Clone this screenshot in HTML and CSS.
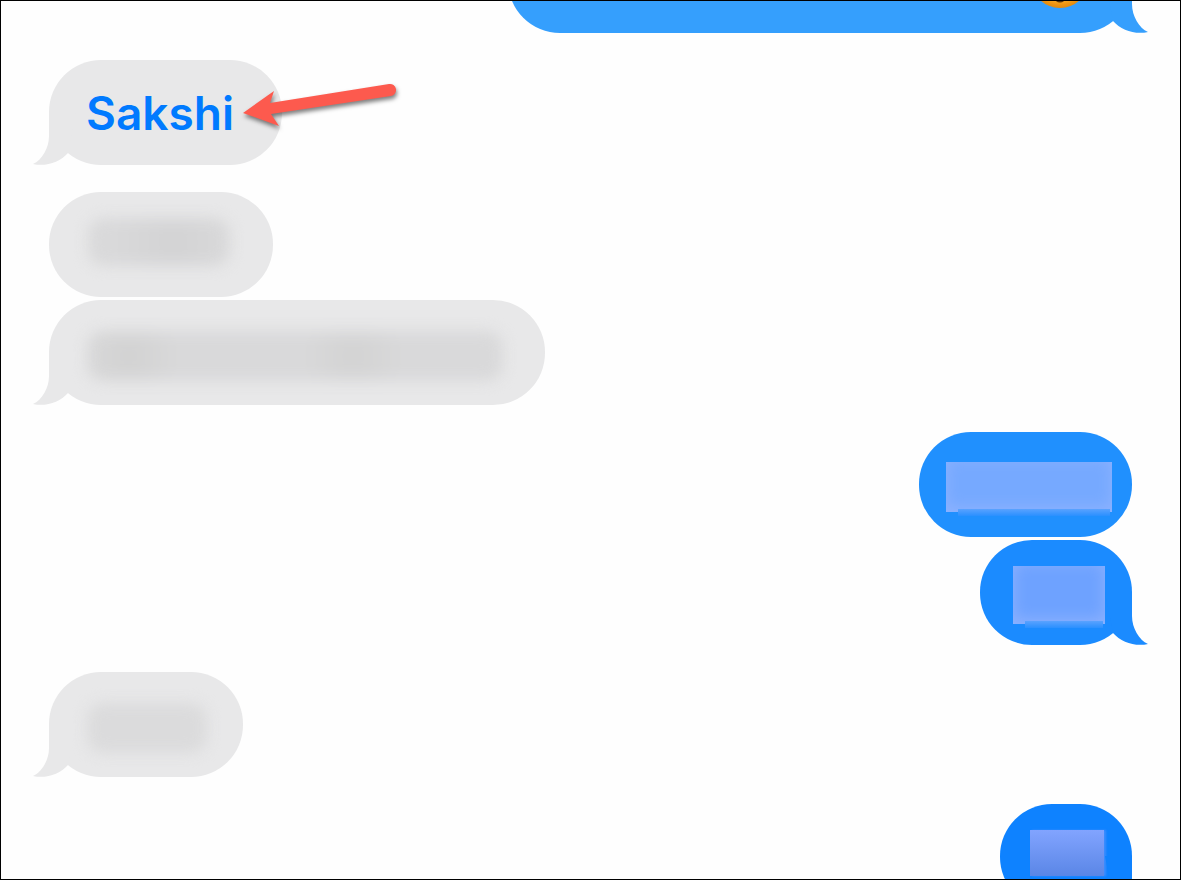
FILE: index.html
```html
<!DOCTYPE html>
<html lang="en">
<head>
    <meta charset="UTF-8">
    <meta name="viewport" content="width=device-width, initial-scale=1.0">
    <title>Messages</title>
    <link rel="stylesheet" href="styles.css">
</head>
<body>
<svg width="0" height="0" class="defs" aria-hidden="true">
    <symbol id="tail" viewBox="0 0 43 53">
        <path d="M16 0V24C16 36 9 48 0 52C13 55 27 50 35 41L43 0Z" fill="currentColor"/>
    </symbol>
</svg>
<main class="thread">
    <div class="group sent">
        <div class="bubble tone-1 long">
            <svg class="emoji" viewBox="0 0 58 58" aria-hidden="true">
                <defs>
                    <radialGradient id="face" cx="50%" cy="42%" r="58%">
                        <stop offset="70%" stop-color="#ffb92e"/>
                        <stop offset="90%" stop-color="#ee9412"/>
                        <stop offset="100%" stop-color="#e08a10"/>
                    </radialGradient>
                </defs>
                <circle cx="29" cy="29" r="29" fill="url(#face)"/>
                <circle cx="19" cy="22" r="4" fill="#5a3206"/>
                <circle cx="39" cy="22" r="4" fill="#5a3206"/>
                <path d="M18 42Q29 63 40 42Z" fill="#5a3206"/>
            </svg>
            <svg class="tail"><use href="#tail"/></svg>
        </div>
    </div>

    <div class="group received">
        <div class="bubble">
            <a href="#" class="mention">Sakshi</a>
            <svg class="tail"><use href="#tail"/></svg>
            <svg class="arrow" viewBox="0 0 165 56" aria-hidden="true">
                <path d="M3 33L34 11L30 23L149 4A6 6 0 0 1 151 16L31 34L39 46Z" fill="#fd5a4e"/>
            </svg>
        </div>
    </div>

    <div class="group received">
        <div class="bubble">
            <span class="blurred medium"></span>
        </div>
        <div class="bubble">
            <span class="blurred wide"></span>
            <svg class="tail"><use href="#tail"/></svg>
        </div>
    </div>

    <div class="group sent">
        <div class="bubble tone-2 roomy">
            <span class="blurred medium"></span>
        </div>
        <div class="bubble tone-3">
            <span class="blurred small"></span>
            <svg class="tail"><use href="#tail"/></svg>
        </div>
    </div>

    <div class="group received">
        <div class="bubble">
            <span class="blurred small"></span>
            <svg class="tail"><use href="#tail"/></svg>
        </div>
    </div>

    <div class="group sent">
        <div class="bubble tone-4">
            <span class="blurred tiny"></span>
            <svg class="tail"><use href="#tail"/></svg>
        </div>
    </div>
</main>
</body>
</html>
```
FILE: styles.css
```css
* {
    box-sizing: border-box;
}
body {
    margin: 0;
    height: 100vh;
    overflow: hidden;
    border: 1px solid #000;
    background-color: #fefefe;
    font-family: Inter, "Liberation Sans", sans-serif;
}
.defs {
    position: absolute;
}
/* scrolled so that the first message is cut by the top edge */
.thread {
    display: flex;
    flex-direction: column;
    gap: 27px;
    margin-top: -73px;
    padding: 0 48px;
}
.group {
    display: flex;
    flex-direction: column;
    align-items: flex-start;
    gap: 3px;
}
.sent {
    align-items: flex-end;
}
.bubble {
    position: relative;
    display: flex;
    align-items: flex-start;
    min-height: 105px;
    padding: 26px 37px 19px 33px;
    border-radius: 52px;
    color: #e8e8e9;
    background-color: currentColor;
}
.sent .bubble {
    padding: 26px 27px 19px 33px;
}
.sent .roomy {
    padding: 30px 20px 20px 27px;
}
.sent .long {
    width: 624px;
    max-width: 75%;
    justify-content: flex-end;
    padding: 22px 43px 25px;
}
.tone-1 {
    color: #359ffd;
}
.tone-2 {
    color: #2090fe;
}
.tone-3 {
    color: #1b8bff;
}
.tone-4 {
    color: #0e82ff;
}
.tail {
    position: absolute;
    left: -16px;
    bottom: 0;
    width: 43px;
    height: 53px;
}
.sent .tail {
    left: auto;
    right: -16px;
    transform: scaleX(-1);
}
.emoji {
    width: 58px;
    height: 58px;
}
.mention {
    padding: 0 11px 0 4px;
    font-size: 46px;
    font-weight: 600;
    line-height: 54px;
    color: #007aff;
    text-decoration: none;
}
.arrow {
    position: absolute;
    left: 191px;
    top: 20px;
    width: 165px;
    height: 56px;
    overflow: visible;
    filter: drop-shadow(1px 3px 2px rgba(0, 0, 0, 0.5));
}

/* hidden message text */
.blurred {
    position: relative;
    height: 60px;
}
.received .blurred::before {
    content: "";
    position: absolute;
    inset: 5px;
    border-radius: 16px;
    background-color: #d9d9da;
    filter: blur(7px);
}
.received .medium {
    width: 154px;
}
.received .medium::before {
    inset: 0 6px 12px;
    background-image: radial-gradient(circle at 60% 50%, #d3d3d4, transparent 60px);
}
.received .wide {
    width: 426px;
}
.received .wide::before {
    background-image: radial-gradient(circle at 10% 50%, #d2d2d2, transparent 50px), radial-gradient(circle at 64% 50%, #d3d3d3, transparent 50px);
}
.received .small {
    width: 130px;
    margin-right: -6px;
}
.received .small::before {
    background-color: #dbdbdc;
}
.sent .blurred {
    height: 58px;
    background-color: #6ea2ff;
    box-shadow: inset 0 -4px 16px #8fb3ff;
}
.sent .blurred::after {
    content: "";
    position: absolute;
    left: 12px;
    right: 2px;
    bottom: -4px;
    height: 7px;
    background: linear-gradient(#5aa2ff, #2a90ff);
}
.sent .medium {
    width: 166px;
    height: 50px;
    background-color: #76a9ff;
}
.sent .small {
    width: 92px;
}
.sent .tiny {
    width: 74px;
    height: 46px;
    margin-right: 1px;
    margin-left: -3px;
    background: linear-gradient(#82a4ff, #5a86e6);
    box-shadow: 2px 0 2px #3d8dff;
}
.sent .tiny::after {
    display: none;
}
```
